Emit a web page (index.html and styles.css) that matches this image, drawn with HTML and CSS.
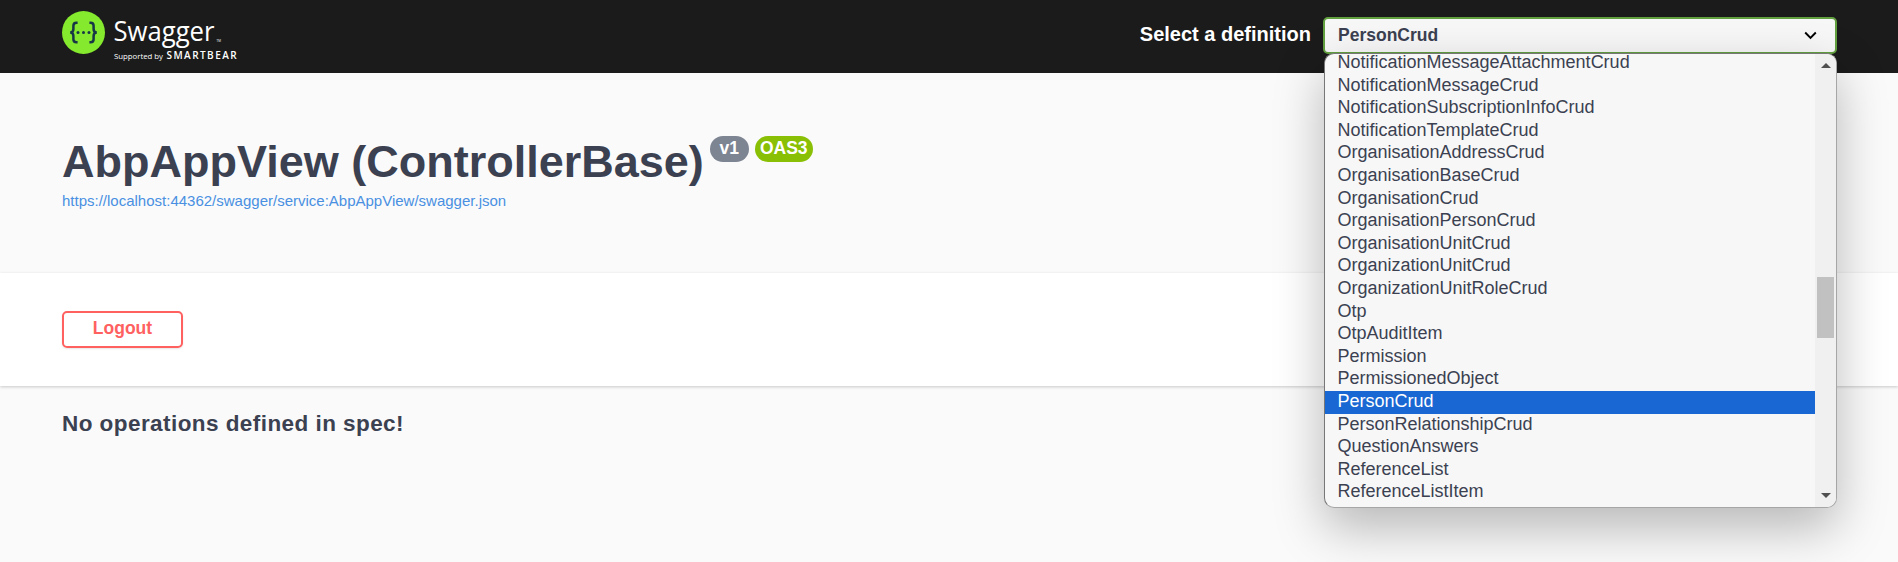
FILE: index.html
```html
<!DOCTYPE html>
<html lang="en">
<head>
<meta charset="utf-8">
<title>Swagger UI</title>
<link rel="stylesheet" href="styles.css">
</head>
<body>
<header class="topbar">
  <div class="wrapper topbar-inner">
    <svg class="logo" width="178" height="56" viewBox="0 0 178 56" role="img" aria-label="Swagger">
      <circle cx="21.5" cy="24.5" r="21.5" fill="#85ea2d"/>
      <g fill="none" stroke="#173647" stroke-width="2.5">
        <path d="M15.6 14.7h-1.2q-3 0-3 3v3.2q0 3.5-3.2 3.6q3.2.1 3.2 3.6v3.2q0 3 3 3h1.2"/>
        <path d="M27.4 14.7h1.2q3 0 3 3v3.2q0 3.5 3.2 3.6q-3.2.1-3.2 3.6v3.2q0 3-3 3h-1.2"/>
      </g>
      <g fill="#173647"><circle cx="16" cy="24.5" r="1.5"/><circle cx="21.5" cy="24.5" r="1.5"/><circle cx="27" cy="24.5" r="1.5"/></g>
      <text class="logo-name" x="51.5" y="33.3" textLength="101" lengthAdjust="spacingAndGlyphs">Swagger</text>
      <text class="logo-tm" x="154.5" y="33.5">TM</text>
      <text class="logo-by" x="52" y="51" textLength="49" lengthAdjust="spacingAndGlyphs">Supported by</text>
      <text class="logo-brand" x="104.5" y="51">SMARTBEAR</text>
    </svg>
    <div class="chooser">
      <span class="chooser-label">Select a definition</span>
      <div class="select">
        <span>PersonCrud</span>
        <svg class="chevron" width="13" height="9" viewBox="0 0 13 9"><path d="M1.2 1.5l5.3 5.3 5.3-5.3" fill="none" stroke="#000" stroke-width="1.9"/></svg>
        <div class="menu">
          <ul class="options">
            <li>NotificationMessageAttachmentCrud</li>
            <li>NotificationMessageCrud</li>
            <li>NotificationSubscriptionInfoCrud</li>
            <li>NotificationTemplateCrud</li>
            <li>OrganisationAddressCrud</li>
            <li>OrganisationBaseCrud</li>
            <li>OrganisationCrud</li>
            <li>OrganisationPersonCrud</li>
            <li>OrganisationUnitCrud</li>
            <li>OrganizationUnitCrud</li>
            <li>OrganizationUnitRoleCrud</li>
            <li>Otp</li>
            <li>OtpAuditItem</li>
            <li>Permission</li>
            <li>PermissionedObject</li>
            <li class="selected">PersonCrud</li>
            <li>PersonRelationshipCrud</li>
            <li>QuestionAnswers</li>
            <li>ReferenceList</li>
            <li>ReferenceListItem</li>
          </ul>
          <div class="scrollbar">
            <svg width="10" height="5" viewBox="0 0 10 5"><path d="M0 5L5 0l5 5z" fill="#505050"/></svg>
            <div class="thumb"></div>
            <svg class="down" width="10" height="5" viewBox="0 0 10 5"><path d="M0 0l5 5 5-5z" fill="#505050"/></svg>
          </div>
        </div>
      </div>
    </div>
  </div>
</header>
<main>
  <section class="wrapper info">
    <div class="title-row">
      <h1 class="title">AbpAppView (ControllerBase)</h1>
      <span class="badge version">v1</span>
      <span class="badge oas">OAS3</span>
    </div>
    <a class="spec-link">https://localhost:44362/swagger/service:AbpAppView/swagger.json</a>
  </section>
  <section class="scheme">
    <div class="wrapper"><button class="logout">Logout</button></div>
  </section>
  <section class="wrapper">
    <h3 class="empty">No operations defined in spec!</h3>
  </section>
</main>
</body>
</html>
```
FILE: styles.css
```css
* { box-sizing: border-box; }
body {
  margin: 0;
  height: 562px;
  overflow: hidden;
  background: #fafafa;
  color: #3b4151;
  font-family: "Liberation Sans", Arial, sans-serif;
}
.wrapper { padding: 0 61px 0 62px; }
.topbar { height: 73px; background: #1b1b1b; }
.topbar-inner { display: flex; justify-content: space-between; }
.logo { margin-top: 8px; }
.logo text { fill: #fff; font-family: "Open Sans", "Noto Sans", sans-serif; }
.logo .logo-name { font-size: 28px; }
.logo .logo-tm { font-size: 3px; }
.logo .logo-by { font-size: 7.5px; }
.logo .logo-brand { font-size: 10px; font-weight: 600; letter-spacing: 1.45px; }
.chooser { display: flex; align-items: center; height: 37px; margin-top: 17px; }
.chooser-label { margin: 0 12px 2px 0; font-size: 20px; font-weight: 700; line-height: 35px; color: #fff; }
.select {
  position: relative;
  display: flex;
  justify-content: space-between;
  align-items: center;
  width: 514px;
  height: 37px;
  padding: 0 18px 1px 13px;
  border: 2px solid #62a03f;
  border-radius: 5px;
  background: #f7f7f7;
  font-size: 17.5px;
  font-weight: 700;
}
.menu {
  position: absolute;
  z-index: 2;
  top: 34px;
  left: -1px;
  display: flex;
  width: 513px;
  height: 455px;
  overflow: hidden;
  border: 1px solid #a6a6a6;
  border-left-color: #777;
  border-top-color: #777;
  border-radius: 10px;
  background: #f7f7f7;
  box-shadow: 0 20px 50px rgba(0, 0, 0, .27);
  font-size: 18px;
  font-weight: 400;
}
.options { flex: 1; margin: -2px 0 0; padding: 0; list-style: none; }
.options li { height: 22.6px; padding-left: 12.5px; line-height: 20.6px; white-space: nowrap; }
.options .selected { background: #1967d2; color: #fff; }
.scrollbar {
  display: flex;
  flex-direction: column;
  align-items: center;
  width: 21px;
  padding: 9px 0;
  background: #f0f0f0;
}
.thumb { width: 17px; height: 61px; margin-top: 209px; background: #c1c1c1; }
.down { margin-top: auto; }
.info { height: 200px; padding-top: 62px; }
.title-row { display: flex; align-items: flex-start; }
.title { margin: 0; font-size: 45px; line-height: 54px; }
.badge {
  height: 26px;
  margin-top: 1px;
  border-radius: 13px;
  color: #fff;
  font-size: 17.5px;
  font-weight: 700;
  line-height: 24px;
  text-align: center;
}
.version { width: 39px; margin-left: 6px; background: #7d8492; }
.oas { width: 58px; margin-left: 6px; background: #89bf04; }
.spec-link { display: block; margin-top: 3px; font-size: 15px; line-height: 18px; color: #4990e2; }
.scheme { height: 113px; padding-top: 38px; background: #fff; box-shadow: 0 1px 3px rgba(0, 0, 0, .2); }
.logout {
  display: block;
  width: 121px;
  height: 37px;
  padding: 0 0 2px;
  border: 2px solid #ff6060;
  border-radius: 5px;
  background: transparent;
  box-shadow: 0 1px 2px rgba(0, 0, 0, .1);
  color: #ff6060;
  font: 700 17.5px "Liberation Sans", Arial, sans-serif;
}
.empty { margin: 24px 0 0; font-size: 22.5px; line-height: 28px; letter-spacing: .44px; }
```
